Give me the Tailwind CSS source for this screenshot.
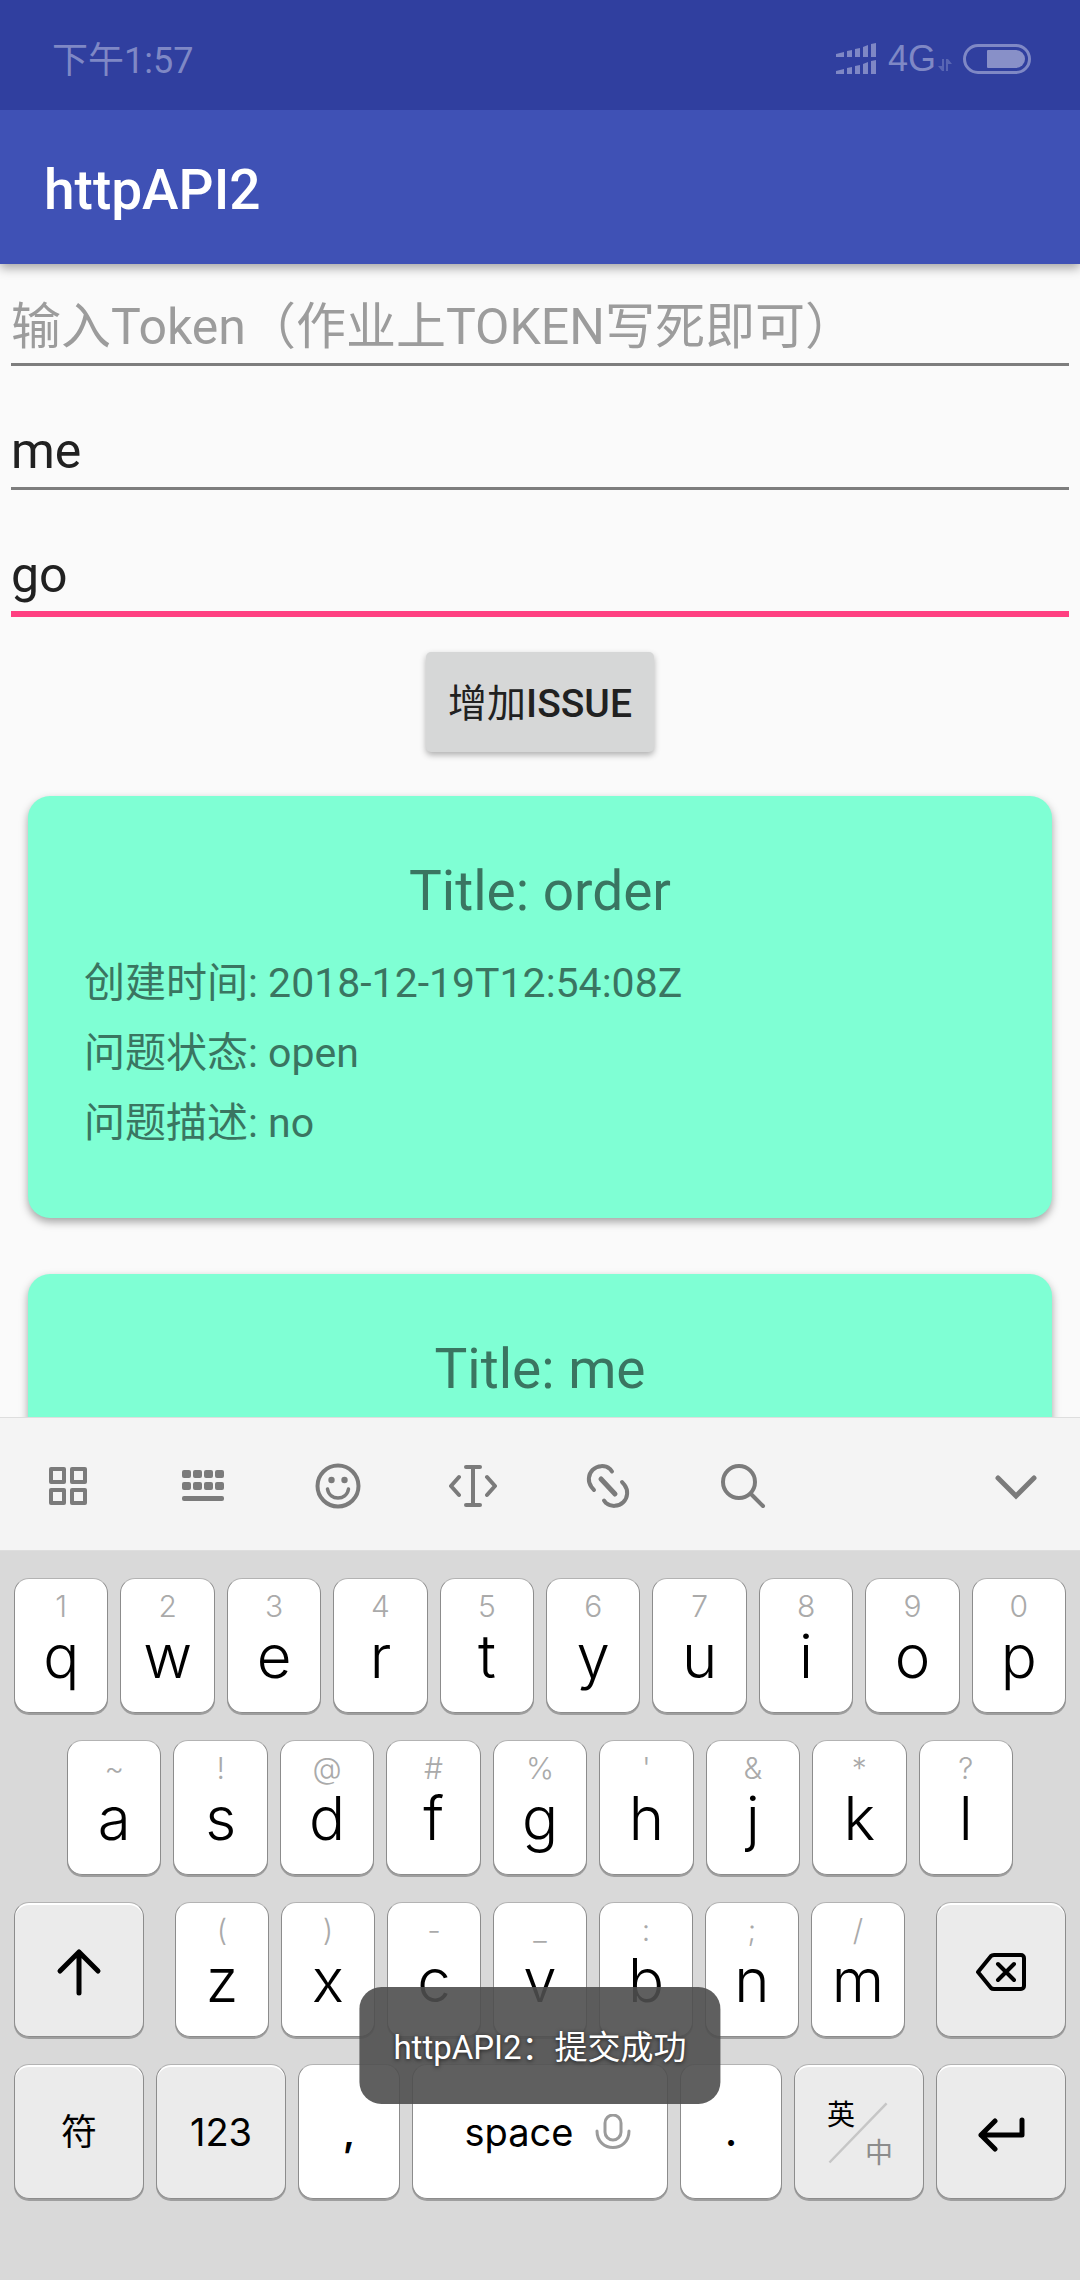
<!DOCTYPE html>
<html lang="zh-CN">
<head>
<meta charset="utf-8">
<meta name="viewport" content="width=device-width, initial-scale=1">
<title>httpAPI2</title>
<script src="https://cdn.jsdelivr.net/npm/@tailwindcss/browser@4"></script>
</head>
<body class="relative flex h-screen flex-col overflow-hidden bg-[#fafafa] font-[Roboto,'Noto_Sans_CJK_SC',sans-serif] text-[#212121]">

  <!-- Status bar -->
  <div class="relative z-20 flex h-[110px] shrink-0 items-center justify-between bg-[#303f9f] pt-2 pr-12 pl-[52px] text-[36px] leading-[48px] text-[#7f88c5]">
    <span class="pt-[3px]">下午1:57</span>
    <div class="flex items-center">
      <svg class="mr-3 h-8 w-10" viewBox="0 0 40 32" fill="currentColor" aria-hidden="true">
        <path d="M0 11l8-2v5H0zM11 8l5-1v7h-5zM19 6l5-1v9h-5zM27 4l5-2v12h-5zM35 1l5-1v14h-5zM0 28l8-2v5H0zM11 25l5-1v7h-5zM19 23l5-1v9h-5zM27 21l5-2v12h-5zM35 18l5-1v14h-5z"/>
      </svg>
      <span class="font-['Liberation_Sans']">4G</span>
      <svg class="mt-3 mr-[10px] ml-[2px] h-[14px] w-[14px]" viewBox="0 0 14 14" fill="#5865b3" aria-hidden="true">
        <path d="M4 1h2v12H4L0 8h4zM8 1h2l4 5h-4v7H8z"/>
      </svg>
      <svg class="h-8 w-[70px]" viewBox="0 0 70 32" fill="none" aria-hidden="true">
        <rect x="2.500" y="2.500" width="65" height="27" rx="13.500" stroke="currentColor" stroke-width="3"/>
        <path d="M26 7h28a9 9 0 0 1 0 18H26a1 1 0 0 1-1-1V8a1 1 0 0 1 1-1z" fill="#8890c8"/>
      </svg>
    </div>
  </div>

  <!-- App bar -->
  <header class="relative z-10 flex h-[154px] shrink-0 items-center bg-[#3f51b5] px-11 pt-[6px] shadow-[0_4px_10px_rgba(0,0,0,0.35)]">
    <h1 class="text-[55px] leading-[64px] font-medium text-white">httpAPI2</h1>
  </header>

  <main class="min-h-0 flex-1 overflow-hidden">
    <form class="flex flex-col items-center px-[11px] text-[50px]">
      <input type="text" aria-label="Token" placeholder="输入Token（作业上TOKEN写死即可）" class="h-[102px] w-full border-b-[3px] border-[#7d7d7d] pt-[26px] outline-none placeholder:text-[#9c9c9c]">
      <input type="text" aria-label="Title" value="me" class="mt-[22px] h-[102px] w-full border-b-[3px] border-[#7d7d7d] pt-[26px] outline-none">
      <input type="text" aria-label="Body" value="go" class="mt-[22px] h-[105px] w-full border-b-[6px] border-[#ff4081] pt-[26px] outline-none">
      <button type="button" class="mt-[35px] h-[100px] rounded-[5px] bg-[#d6d7d7] px-[22px] pt-1 text-[39px] leading-[48px] shadow-[0_3px_6px_rgba(0,0,0,0.3)]">增加<span class="font-medium">ISSUE</span></button>
    </form>

    <section class="mt-11 flex flex-col gap-14 px-7 text-[#3a7561]">
      <article class="rounded-[22px] bg-[#7fffd4] px-14 pt-[63px] pb-[60px] shadow-[0_4px_8px_rgba(0,0,0,0.35)]">
        <h2 class="mb-[25px] text-center text-[55px] leading-[64px]">Title: order</h2>
        <p class="text-[41px] leading-[70px]">创建时间: 2018-12-19T12:54:08Z</p>
        <p class="text-[41px] leading-[70px]">问题状态: open</p>
        <p class="text-[41px] leading-[70px]">问题描述: no</p>
      </article>
      <article class="rounded-[22px] bg-[#7fffd4] px-14 pt-[63px] pb-[60px] shadow-[0_4px_8px_rgba(0,0,0,0.35)]">
        <h2 class="mb-[25px] text-center text-[55px] leading-[64px]">Title: me</h2>
      </article>
    </section>
  </main>

  <!-- Keyboard tool strip -->
  <div class="z-10 grid h-[134px] shrink-0 grid-cols-8 items-center border-y border-[#dedede] bg-[#f4f4f4] pt-1 text-[#7b7b7b] [&_svg]:mx-auto [&_svg]:size-12">
    <button type="button" aria-label="面板"><svg viewBox="0 0 48 48" fill="none" stroke="currentColor" stroke-width="4" stroke-linejoin="round"><path d="M7 7h13v13H7zM28 7h13v13H28zM7 28h13v13H7zM28 28h13v13H28z"/></svg></button>
    <button type="button" aria-label="键盘"><svg viewBox="0 0 48 48" fill="currentColor"><g id="dots"><rect x="3" y="8" width="9" height="8" rx="2"/><rect x="14" y="8" width="9" height="8" rx="2"/><rect x="25" y="8" width="9" height="8" rx="2"/><rect x="36" y="8" width="9" height="8" rx="2"/></g><use href="#dots" y="12"/><rect x="3" y="34" width="42" height="5" rx="2"/></svg></button>
    <button type="button" aria-label="表情"><svg viewBox="0 0 48 48" fill="none" stroke="currentColor" stroke-width="4" stroke-linecap="round"><circle cx="24" cy="24" r="20.500"/><path d="M13.500 27c2 12 19 12 21 0" stroke-width="3.500"/><g fill="currentColor" stroke="none"><circle cx="17.500" cy="18" r="3.200"/><circle cx="30.500" cy="18" r="3.200"/></g></svg></button>
    <button type="button" aria-label="光标"><svg viewBox="0 0 48 48" fill="none" stroke="currentColor" stroke-width="4" stroke-linecap="round" stroke-linejoin="round"><path d="M17 5h14M17 43h14M24 5v38M10 15l-8 9 8 9M38 15l8 9-8 9"/></svg></button>
    <button type="button" aria-label="链接"><svg viewBox="0 0 48 48" fill="none" stroke="currentColor" stroke-width="4" stroke-linecap="round"><path d="M10 28L7.500 25A13 13 0 0 1 26 7L28 9.500M38 20L40.500 23A13 13 0 0 1 22 41L20 38.500"/><path d="M17 17l14 15" stroke-width="5"/></svg></button>
    <button type="button" aria-label="搜索"><svg viewBox="0 0 48 48" fill="none" stroke="currentColor" stroke-width="4" stroke-linecap="round"><circle cx="20" cy="20" r="16"/><path d="M32 32l12 12"/></svg></button>
    <button type="button" aria-label="收起" class="col-start-8"><svg viewBox="0 0 48 48" fill="none" stroke="currentColor" stroke-width="5" stroke-linecap="round"><path d="M9 16l18 18 18-18"/></svg></button>
  </div>

  <!-- Keys -->
  <div class="flex shrink-0 flex-col gap-[27px] bg-[#d9d9d9] px-[14px] pt-[27px] pb-[81px] font-[Inter,'Noto_Sans_CJK_SC',sans-serif] text-[60px] leading-[64px] font-light text-black [&_button]:h-[135px] [&_button]:min-w-0 [&_button]:rounded-[15px] [&_button]:border [&_button]:border-[#8c8c8c] [&_button]:border-t-[#b3b3b3] [&_button]:shadow-[0_2px_0_#9e9e9e] [&_small]:block [&_small]:text-[30px] [&_small]:leading-[36px] [&_small]:text-[#aaaaaa]">
    <div class="flex gap-3 *:flex-1 *:bg-white *:pb-4">
      <button type="button"><small>1</small>q</button>
      <button type="button"><small>2</small>w</button>
      <button type="button"><small>3</small>e</button>
      <button type="button"><small>4</small>r</button>
      <button type="button"><small>5</small>t</button>
      <button type="button"><small>6</small>y</button>
      <button type="button"><small>7</small>u</button>
      <button type="button"><small>8</small>i</button>
      <button type="button"><small>9</small>o</button>
      <button type="button"><small>0</small>p</button>
    </div>
    <div class="flex gap-3 px-[53px] *:flex-1 *:bg-white *:pb-4">
      <button type="button"><small>~</small>a</button>
      <button type="button"><small>!</small>s</button>
      <button type="button"><small>@</small>d</button>
      <button type="button"><small>#</small>f</button>
      <button type="button"><small>%</small>g</button>
      <button type="button"><small>'</small>h</button>
      <button type="button"><small>&amp;</small>j</button>
      <button type="button"><small>*</small>k</button>
      <button type="button"><small>?</small>l</button>
    </div>
    <div class="grid grid-cols-[130fr_730fr_130fr] gap-[31px]">
      <button type="button" aria-label="Shift" class="bg-[#ebebeb] pt-1 inset-shadow-[0_2px_0_#ffffff]"><svg class="mx-auto size-12" viewBox="0 0 48 48" fill="none" stroke="currentColor" stroke-width="5" stroke-linecap="round" stroke-linejoin="round"><path d="M24 45V4M5 23L24 4l19 19"/></svg></button>
      <div class="flex min-w-0 gap-3 *:flex-1 *:bg-white *:pb-4">
        <button type="button"><small>(</small>z</button>
        <button type="button"><small>)</small>x</button>
        <button type="button"><small>-</small>c</button>
        <button type="button"><small>_</small>v</button>
        <button type="button"><small>:</small>b</button>
        <button type="button"><small>;</small>n</button>
        <button type="button"><small>/</small>m</button>
      </div>
      <button type="button" aria-label="Backspace" class="bg-[#ebebeb] pt-1 inset-shadow-[0_2px_0_#ffffff]"><svg class="mx-auto h-10 w-[52px]" viewBox="0 0 52 40" fill="none" stroke="currentColor" stroke-width="4" stroke-linecap="round" stroke-linejoin="round"><path d="M19 3h27a3 3 0 0 1 3 3v28a3 3 0 0 1-3 3H19q-2 0-3-1L3 20 16 4q1-1 3-1zM23 12l16 16M39 12L23 28"/></svg></button>
    </div>
    <div class="grid grid-cols-[130fr_130fr_102fr_256fr_102fr_130fr_130fr] gap-3 text-[38px] leading-[48px] font-normal">
      <button type="button" class="bg-[#ebebeb] text-[36px] inset-shadow-[0_2px_0_#ffffff]">符</button>
      <button type="button" class="bg-[#ebebeb] inset-shadow-[0_2px_0_#ffffff]">123</button>
      <button type="button" class="bg-white font-semibold">,</button>
      <button type="button" class="flex items-center justify-center gap-[22px] bg-white pl-4">space
        <svg class="h-9 w-9 text-[#9b9b9b]" viewBox="0 0 36 36" fill="none" stroke="currentColor" stroke-width="3" stroke-linecap="round" aria-hidden="true"><rect x="10" y="1" width="16" height="25" rx="8"/><path d="M2 17c0 22 32 22 32 0"/></svg>
      </button>
      <button type="button" class="bg-white font-semibold">.</button>
      <button type="button" aria-label="英/中" class="relative bg-[#ebebeb] pt-1 text-[28px] leading-[38px] inset-shadow-[0_2px_0_#ffffff]">
        <svg class="absolute inset-0 size-full" viewBox="0 0 130 135" fill="none" stroke="#c6c6c6" stroke-width="2.500" aria-hidden="true"><path d="M35 99L93 39"/></svg>
        <span class="block pr-9">英</span>
        <span class="block pl-10 text-[#8c8c8c]">中</span>
      </button>
      <button type="button" aria-label="Enter" class="bg-[#ebebeb] pt-1 inset-shadow-[0_2px_0_#ffffff]"><svg class="mx-auto h-9 w-12" viewBox="0 0 48 36" fill="none" stroke="currentColor" stroke-width="5" stroke-linecap="round" stroke-linejoin="round"><path d="M45 4v15H4M18 5L4 19l14 14"/></svg></button>
    </div>
  </div>

  <!-- Toast -->
  <div role="status" class="absolute bottom-[176px] left-1/2 z-20 -translate-x-1/2 rounded-[22px] bg-[#4e4e4e]/90 px-[34px] pt-9 pb-8 text-[33px] leading-[49px] whitespace-nowrap text-white text-shadow-[0_1px_4px_rgba(0,0,0,0.7)]">httpAPI2：提交成功</div>
</body>
</html>
